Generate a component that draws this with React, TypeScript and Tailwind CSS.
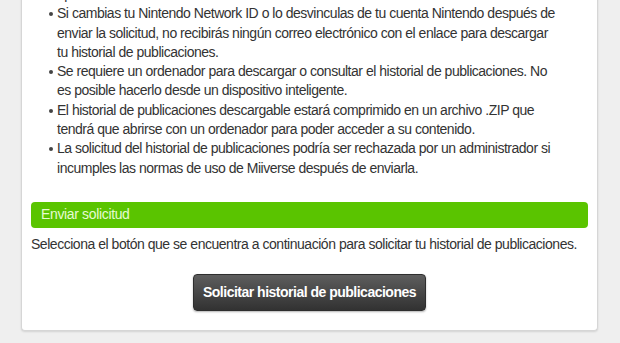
import React from 'react';

const notes = [
  'Si cambias tu Nintendo Network ID o lo desvinculas de tu cuenta Nintendo después de enviar la solicitud, no recibirás ningún correo electrónico con el enlace para descargar tu historial de publicaciones.',
  'Se requiere un ordenador para descargar o consultar el historial de publicaciones. No es posible hacerlo desde un dispositivo inteligente.',
  'El historial de publicaciones descargable estará comprimido en un archivo .ZIP que tendrá que abrirse con un ordenador para poder acceder a su contenido.',
  'La solicitud del historial de publicaciones podría ser rechazada por un administrador si incumples las normas de uso de Miiverse después de enviarla.',
];

function Note({ text }: { text: string }) {
  return (
    <li className="flex">
      <span className="w-[35px] shrink-0 flex justify-end pr-[4px] pt-[8px]">
        <span className="w-[4px] h-[4px] rounded-full bg-[#444]" />
      </span>
      <span className="pr-[37px]">{text}</span>
    </li>
  );
}

export default function App() {
  return (
    <div
      className="h-[343px] w-[620px] overflow-hidden bg-[#efefef] text-[#333]"
      style={{ fontFamily: '"Liberation Sans", Arial, sans-serif' }}
    >
      <div className="ml-[21px] w-[577px] bg-white border border-t-0 border-[#d6d6d6] rounded-b-[4px] shadow-[0_1px_2px_rgba(0,0,0,0.12)] pb-[19px]">
        <ul className="-mt-[15px] text-[14px] tracking-[-0.48px] leading-[19.3px]">
          <li className="pl-[35px]">aproximadamente.</li>
          {notes.map((n) => (
            <Note key={n} text={n} />
          ))}
        </ul>

        <div className="mx-[9px] mt-[24px] h-[26px] rounded-[4px] bg-[#5ac400] flex items-center pl-[10px] text-[14px] tracking-[-0.35px] text-[#e6fbd2]">
          Enviar solicitud
        </div>

        <p className="mt-[7px] px-[9px] text-[14px] tracking-[-0.47px] leading-[19.3px]">
          Selecciona el botón que se encuentra a continuación para solicitar tu historial de publicaciones.
        </p>

        <div className="mt-[20px] flex justify-center">
          <button className="h-[37px] w-[233px] rounded-[4px] bg-gradient-to-b from-[#5e5e5e] to-[#323232] border border-[#2e2e2e] text-white font-bold text-[14px] tracking-[-0.5px] shadow-[0_1px_2px_rgba(0,0,0,0.3)]">
            Solicitar historial de publicaciones
          </button>
        </div>
      </div>
    </div>
  );
}
